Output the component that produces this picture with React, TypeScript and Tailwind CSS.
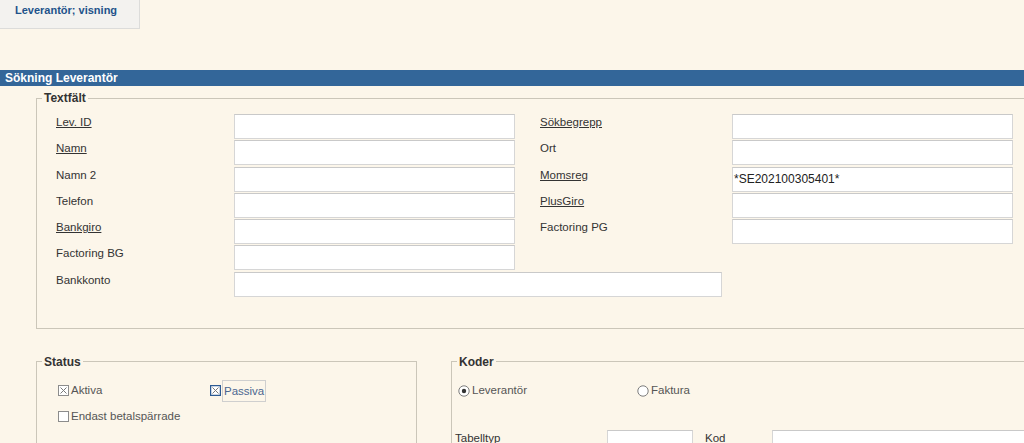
const font = "font-['Liberation_Sans','Arial',sans-serif]";

function Check({ checked, focus }: { checked?: boolean; focus?: boolean }) {
  return (
    <svg width="11" height="11" viewBox="0 0 11 11" className="shrink-0">
      <rect x="0.5" y="0.5" width="10" height="10" fill="#fff" stroke={focus ? '#2c5a93' : '#8c8c8c'} strokeWidth={focus ? 1.5 : 1} />
      {checked && <path d="M2.5 2.5 L8.5 8.5 M8.5 2.5 L2.5 8.5" stroke="#7a7a7a" strokeWidth="1" />}
    </svg>
  );
}

function Radio({ checked }: { checked?: boolean }) {
  return (
    <svg width="12" height="12" viewBox="0 0 12 12" className="shrink-0">
      <circle cx="6" cy="6" r="5.2" fill="#fff" stroke="#7d7d7d" strokeWidth="1" />
      {checked && <circle cx="6" cy="6" r="2.2" fill="#333" />}
    </svg>
  );
}

function Field({ w, value }: { w: string; value?: string }) {
  return (
    <div className={`${w} shrink-0 h-[25px] bg-white border border-[#d6d6d6] border-t-[#c9c9c9] px-[1px] text-[12px] leading-[23px] text-[#222]`}>
      {value}
    </div>
  );
}

function Label({ text, u, w }: { text: string; u?: boolean; w: string }) {
  return (
    <div className={`${w} shrink-0 pt-[1px] text-[11.5px] leading-[14px] text-[#333] ${u ? 'underline' : ''}`}>{text}</div>
  );
}

const rows = [
  { l: 'Lev. ID', lu: true, r: 'Sökbegrepp', ru: true },
  { l: 'Namn', lu: true, r: 'Ort' },
  { l: 'Namn 2', r: 'Momsreg', ru: true, v: '*SE202100305401*' },
  { l: 'Telefon', r: 'PlusGiro', ru: true },
  { l: 'Bankgiro', lu: true, r: 'Factoring PG' },
  { l: 'Factoring BG' },
];

const legend = 'ml-[5px] px-[2px] text-[12px] leading-[14px] font-bold text-[#333]';

export default function App() {
  return (
    <div className={`w-[1024px] h-[443px] overflow-hidden bg-[#fcf6ea] ${font}`}>
      <div className="w-[140px] h-[29px] bg-[#f3f2ef] border-r border-b border-[#dcdcda] pl-[15px] pt-[3px] text-[11px] leading-[14px] font-bold text-[#22528a]">
        Leverantör; visning
      </div>

      <div className="mt-[41px] h-[16px] bg-[#336699] pl-[5px] text-[12px] leading-[16px] font-bold text-white">
        Sökning Leverantör
      </div>

      <fieldset className="ml-[36px] mt-[5px] w-[1010px] border border-[#cbc6b9] pb-[31px]">
        <legend className={legend}>Textfält</legend>
        <div className="pl-[19px] pt-[9px] flex flex-col gap-[1.3px]">
          {rows.map((r, i) => (
            <div key={i} className="flex items-start">
              <Label text={r.l} u={r.lu} w="w-[178px]" />
              <Field w="w-[281px]" />
              {r.r && (
                <>
                  <div className="w-[25px] shrink-0" />
                  <Label text={r.r} u={r.ru} w="w-[192px]" />
                  <Field w="w-[281px]" value={r.v} />
                </>
              )}
            </div>
          ))}
          <div className="flex items-start">
            <Label text="Bankkonto" w="w-[178px]" />
            <Field w="w-[488px]" />
          </div>
        </div>
      </fieldset>

      <div className="mt-[26px] flex items-start">
        <fieldset className="ml-[36px] shrink-0 w-[381px] h-[120px] border border-[#cbc6b9]">
          <legend className={legend}>Status</legend>
          <div className="pl-[21px] pt-[9px] text-[11.5px] text-[#555]">
            <div className="flex items-center h-[26px]">
              <div className="w-[152px] flex items-center gap-[2px]">
                <Check checked />
                <span>Aktiva</span>
              </div>
              <div className="flex items-center gap-[1px]">
                <Check checked focus />
                <span className="border border-[#cfcfcf] px-[1px] h-[22px] leading-[20px] text-[#4b6690]">Passiva</span>
              </div>
            </div>
            <div className="flex items-center h-[26px] gap-[2px]">
              <Check />
              <span>Endast betalspärrade</span>
            </div>
          </div>
        </fieldset>

        <fieldset className="ml-[34px] shrink-0 w-[600px] h-[120px] border border-[#cbc6b9]">
          <legend className={legend}>Koder</legend>
          <div className="pl-[6px] pt-[9px] text-[11.5px] text-[#555]">
            <div className="flex items-center h-[26px]">
              <div className="w-[179px] flex items-center gap-[2px]">
                <Radio checked />
                <span>Leverantör</span>
              </div>
              <div className="flex items-center gap-[2px]">
                <Radio />
                <span>Faktura</span>
              </div>
            </div>
            <div className="mt-[26px] -ml-[3px] flex items-start">
              <div className="w-[152px] shrink-0 pt-[1px] leading-[14px] text-[#333]">Tabelltyp</div>
              <Field w="w-[86px]" />
              <div className="w-[79px] shrink-0 pl-[12px] pt-[1px] leading-[14px] text-[#333]">Kod</div>
              <Field w="w-[300px]" />
            </div>
          </div>
        </fieldset>
      </div>
    </div>
  );
}
